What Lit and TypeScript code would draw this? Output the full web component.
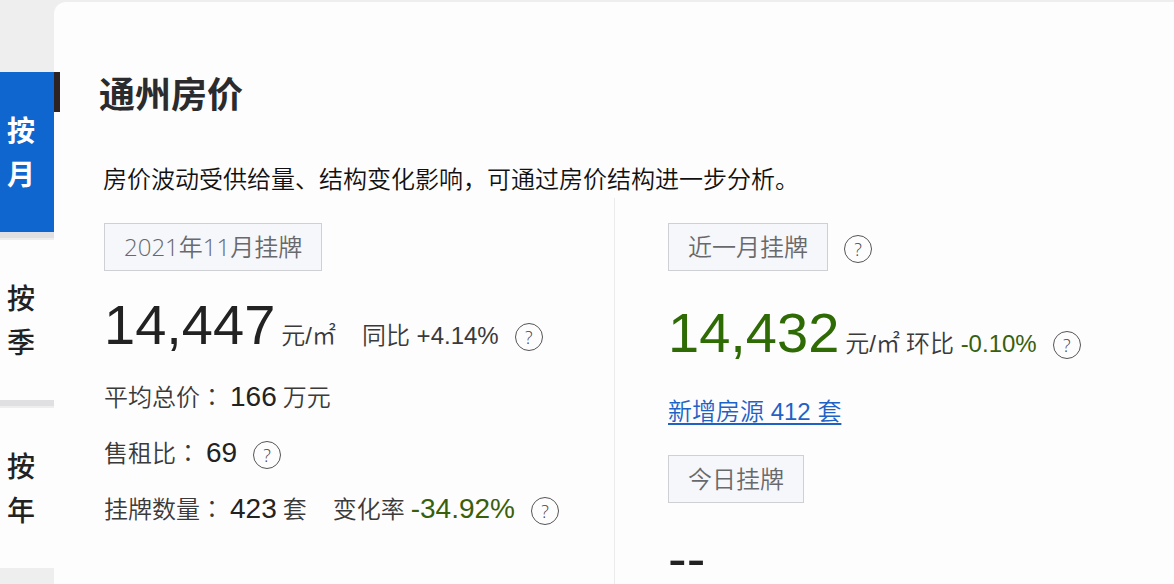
import { LitElement, html, css } from "lit";
import { customElement, property, state } from "lit/decorators.js";

@customElement("help-tip")
class HelpTip extends LitElement {
  @property() label = "";

  static styles = css`
    :host {
      display: block;
      margin-left: 16px;
    }
    .tip {
      display: block;
      box-sizing: border-box;
      width: 28px;
      height: 28px;
      padding: 0;
      border: 1px solid #555;
      border-radius: 50%;
      background: transparent;
      color: #444;
      font: 300 18px/26px "Open Sans", "Noto Sans", sans-serif;
      text-align: center;
      cursor: pointer;
    }
  `;

  render() {
    return html`<button class="tip" type="button" aria-label=${this.label}>?</button>`;
  }
}

@customElement("app-root")
class AppRoot extends LitElement {
  @state() private period = "按月";

  static styles = css`
    :host {
      display: grid;
      grid-template-columns: 54px minmax(0, 1fr);
      min-height: 100vh;
      background: #eeeeef;
      color: #3a3a3a;
      font-family: "Liberation Sans", "Noto Sans CJK SC", sans-serif;
      font-size: 24px;
      font-weight: 350;
    }
    .tabs {
      display: flex;
      flex-direction: column;
      gap: 8px;
      padding-top: 72px;
    }
    .tab {
      height: 160px;
      padding: 0 12px 2px 0;
      border: 0;
      background: #fdfdfd;
      box-shadow: 0 6px 0 #e0dfe1;
      color: #222;
      font: 500 28px/44px "Noto Sans CJK SC", sans-serif;
      cursor: pointer;
    }
    .tab:last-child {
      box-shadow: none;
    }
    .tab.active {
      background: #1066cf;
      color: #fff;
      font-weight: 700;
    }
    .char {
      display: block;
    }
    .card {
      display: flex;
      flex-direction: column;
      margin-top: 2px;
      padding-top: 70px;
      border-top-left-radius: 12px;
      background: #fdfdfd;
    }
    .title {
      display: flex;
      align-items: flex-start;
      gap: 39px;
      margin: 0;
      color: #2b2b2e;
      font: 700 36px/40px "Noto Sans CJK SC", sans-serif;
    }
    .title::before {
      content: "";
      width: 6px;
      height: 40px;
      background: #2c2322;
    }
    .intro {
      margin: 50px 0 0;
      padding-left: 49px;
      color: #111;
      line-height: 36px;
    }
    .columns {
      flex: 1;
      display: grid;
      grid-template-columns: repeat(2, minmax(0, 1fr));
    }
    .column {
      padding: 25px 0 0 53px;
      border-left: 1px solid #ebebee;
    }
    .column.first {
      padding-left: 50px;
      border-left: 0;
    }
    .row {
      display: flex;
      align-items: baseline;
      line-height: 56px;
      white-space: pre;
    }
    .badge {
      box-sizing: border-box;
      height: 48px;
      padding: 0 19px;
      border: 1px solid #cfd0d4;
      background: #f6f7fa;
      color: #68696c;
      font-family: "Open Sans", "Noto Sans CJK SC", sans-serif;
      line-height: 46px;
    }
    .price {
      padding: 22px 0 13px;
    }
    .price.recent {
      padding: 30px 0 19px;
    }
    .big {
      color: #222;
      font-size: 56px;
      line-height: 64px;
    }
    .unit,
    .number,
    .gap {
      margin-left: 6px;
    }
    .price .unit,
    .price .gap,
    .price .wide {
      line-height: 36px;
    }
    .wide {
      margin-left: 26px;
    }
    .number {
      color: #222;
      font-size: 28px;
      line-height: 36px;
    }
    .colon {
      font-family: "Noto Sans CJK TC", sans-serif;
      line-height: 36px;
    }
    .big.green {
      color: #2f6b05;
    }
    .green {
      color: #3a5f0b;
    }
    .link {
      color: #1f62c6;
      text-decoration-thickness: 2px;
      text-underline-offset: 3px;
    }
    .today {
      margin-top: 15px;
    }
    .price.empty {
      padding: 32px 0 0;
    }
    .empty .big {
      line-height: 48px;
    }
  `;

  private tab(name: string) {
    const active = name === this.period;
    return html`<button
      class="tab ${active ? "active" : ""}"
      type="button"
      aria-pressed=${active ? "true" : "false"}
      @click=${() => (this.period = name)}
    >${[...name].map((c) => html`<span class="char">${c}</span>`)}</button>`;
  }

  private label(text: string) {
    return html`<span>${text}<span class="colon">：</span></span>`;
  }

  render() {
    return html`
      <nav class="tabs">${["按月", "按季", "按年"].map((n) => this.tab(n))}</nav>
      <main class="card">
        <h1 class="title">通州房价</h1>
        <p class="intro">房价波动受供给量、结构变化影响，可通过房价结构进一步分析。</p>
        <div class="columns">
          <section class="column first">
            <div class="row"><span class="badge">2021年11月挂牌</span></div>
            <div class="row price"><span class="big">14,447</span><span class="unit">元/㎡</span><span class="wide">同比 +4.14%</span><help-tip label="同比"></help-tip></div>
            <div class="row">${this.label("平均总价")}<span class="number">166</span><span class="gap">万元</span></div>
            <div class="row">${this.label("售租比")}<span class="number">69</span><help-tip label="售租比"></help-tip></div>
            <div class="row">${this.label("挂牌数量")}<span class="number">423</span><span class="gap">套</span><span class="wide">变化率</span><span class="number green">-34.92%</span><help-tip label="变化率"></help-tip></div>
          </section>
          <section class="column">
            <div class="row"><span class="badge">近一月挂牌</span><help-tip label="近一月挂牌"></help-tip></div>
            <div class="row price recent"><span class="big green">14,432</span><span class="unit">元/㎡</span><span class="gap">环比 <span class="green">-0.10%</span></span><help-tip label="环比"></help-tip></div>
            <div class="row"><a class="link" href="#">新增房源 412 套</a></div>
            <div class="row today"><span class="badge">今日挂牌</span></div>
            <div class="row price empty"><span class="big">--</span></div>
          </section>
        </div>
      </main>
    `;
  }
}
